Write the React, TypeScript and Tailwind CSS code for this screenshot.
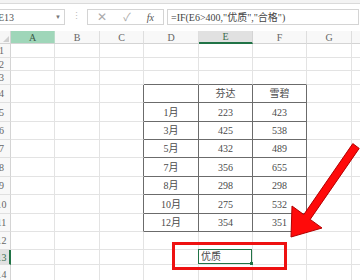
import React from 'react'

const font = { fontFamily: '"Liberation Serif", "Noto Sans CJK SC", serif' }

const colWidths = ['w-[44px]', 'w-[45px]', 'w-[44px]', 'w-[55px]', 'w-[54px]', 'w-[54px]', 'w-[45px]']
const letters = ['A', 'B', 'C', 'D', 'E', 'F', 'G']
const rowHeights = [
  'h-[14px]', 'h-[13px]', 'h-[14px]', 'h-[18px]', 'h-[19px]', 'h-[18px]', 'h-[18px]',
  'h-[19px]', 'h-[18px]', 'h-[19px]', 'h-[18px]', 'h-[18px]', 'h-[15px]', 'h-[20px]',
]

const table: Record<number, string[]> = {
  4: ['', '芬达', '雪碧'],
  5: ['1月', '223', '423'],
  6: ['3月', '425', '538'],
  7: ['5月', '432', '489'],
  8: ['7月', '356', '655'],
  9: ['8月', '298', '298'],
  10: ['10月', '275', '532'],
  11: ['12月', '354', '351'],
}

function Cell({ row, col }: { row: number; col: number }) {
  const inTable = row >= 4 && row <= 11 && col >= 3 && col <= 5
  const leftOfTable = row >= 4 && row <= 11 && col === 2
  const aboveTable = row === 3 && col >= 3 && col <= 5
  const rightDark = inTable || leftOfTable
  const bottomDark = inTable || aboveTable
  const text = inTable ? table[row][col - 3] : ''
  const selected = row === 13 && col === 4
  return (
    <div
      className={[
        'relative flex items-center justify-center border-r border-b text-[10px] text-[#4a4a4a] shrink-0',
        colWidths[col],
        rightDark ? 'border-r-[#6b6b6b]' : 'border-r-[#e3e3e3]',
        bottomDark ? 'border-b-[#6b6b6b]' : 'border-b-[#e3e3e3]',
      ].join(' ')}
    >
      {text}
      {selected ? (
        <div className="absolute -left-[1px] -top-[1px] -right-[0px] -bottom-[0px] border-[1.5px] border-[#217346] flex items-center pl-[2px] text-[10px] text-[#4a4a4a]">
          优质
          <span className="absolute -right-[2px] -bottom-[2px] w-[3px] h-[3px] bg-[#217346]" />
        </div>
      ) : null}
    </div>
  )
}

export default function App() {
  return (
    <div className="relative w-[360px] h-[280px] overflow-hidden bg-white" style={font}>
      {/* ribbon remnant */}
      <div className="h-[4px] bg-[#f3f3f3] border-b border-[#dadada]" />

      {/* formula bar */}
      <div className="flex items-center h-[27px] pb-[1px] bg-white">
        <div className="flex items-center justify-between w-[65px] h-[16px] border border-l-0 border-[#d4d4d4] pl-[0px] pr-[3px] text-[10px] text-[#555]">
          <span className="-ml-[2px]">E13</span>
          <span className="text-[6px] text-[#777]">▼</span>
        </div>
        <div className="w-[22px] flex justify-center text-[9px] text-[#bbb]">⋮</div>
        <div className="flex items-center justify-between w-[77px] h-[16px] border border-[#d4d4d4] px-[9px] text-[#aaa]">
          <span className="text-[12px] leading-none">✕</span>
          <span className="text-[11px] leading-none">✓</span>
          <span className="text-[10px] italic text-[#555]">fx</span>
        </div>
        <div className="ml-[3px] flex items-center w-[192px] h-[16px] border border-[#d4d4d4] pl-[3px] text-[10px] text-[#444] whitespace-nowrap overflow-hidden">
          =IF(E6&gt;400,"优质","合格")
        </div>
      </div>

      {/* column headers */}
      <div className="flex h-[13px]">
        <div className="relative w-[11px] shrink-0 border-r border-b border-[#d4d4d4] bg-[#f6f6f6]">
          <div className="absolute right-[1px] bottom-[1px] w-0 h-0 border-l-[6px] border-l-transparent border-b-[6px] border-b-[#cfcfcf]" />
        </div>
        {letters.map((l, i) => (
          <div
            key={l}
            className={[
              'shrink-0 flex items-center justify-center border-r text-[10px]',
              colWidths[i],
              i === 0
                ? 'bg-[#9fd6b9] text-[#3d5a48] border-r-[#b8dcc8] border-b border-b-[#d4d4d4]'
                : i === 4
                  ? 'bg-[#e1e1e1] text-[#3b6e50] border-r-[#d4d4d4] border-b-2 border-b-[#217346]'
                  : 'bg-[#f8f8f8] text-[#666] border-r-[#dedede] border-b border-b-[#d4d4d4]',
            ].join(' ')}
          >
            {l}
          </div>
        ))}
        <div className="flex-1 bg-[#f8f8f8] border-b border-[#d4d4d4]" />
      </div>

      {/* rows */}
      {rowHeights.map((h, r) => {
        const row = r + 1
        return (
          <div key={row} className={`flex ${h}`}>
            <div
              className={[
                'relative w-[11px] shrink-0 overflow-hidden flex items-center border-b border-[#e0e0e0] text-[10px]',
                row === 13
                  ? 'bg-[#e1e1e1] border-r-2 border-r-[#217346] text-[#3b6e50]'
                  : 'bg-[#f8f8f8] border-r border-r-[#d4d4d4] text-[#666]',
              ].join(' ')}
            >
              <span className="shrink-0 -ml-[10px] w-[23px] text-center">{row}</span>
            </div>
            {letters.map((_, c) => (
              <Cell key={c} row={row} col={c} />
            ))}
            <div className="flex-1 border-b border-[#e3e3e3]" />
          </div>
        )
      })}

      {/* annotation box */}
      <div className="absolute left-[172px] top-[242px] w-[115px] h-[28px] border-[3px] border-[#ee1111]" />

      {/* annotation arrow */}
      <svg className="absolute left-0 top-0" width="360" height="280" viewBox="0 0 360 280">
        <polygon
          points="291,237 292,206 303.8,214.6 352.8,143.6 359.2,148.4 310.2,219.4 322,228"
          fill="#ff0a0a"
          stroke="#b30000"
          strokeWidth="1"
          strokeLinejoin="round"
        />
      </svg>
    </div>
  )
}
